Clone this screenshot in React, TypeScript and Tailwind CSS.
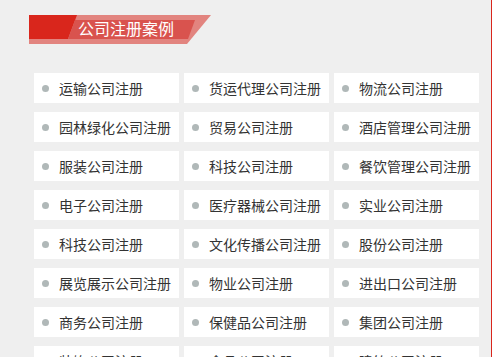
import React from 'react';

const items = [
  '运输公司注册', '货运代理公司注册', '物流公司注册',
  '园林绿化公司注册', '贸易公司注册', '酒店管理公司注册',
  '服装公司注册', '科技公司注册', '餐饮管理公司注册',
  '电子公司注册', '医疗器械公司注册', '实业公司注册',
  '科技公司注册', '文化传播公司注册', '股份公司注册',
  '展览展示公司注册', '物业公司注册', '进出口公司注册',
  '商务公司注册', '保健品公司注册', '集团公司注册',
  '装饰公司注册', '食品公司注册', '建筑公司注册',
];

export default function App() {
  return (
    <div
      className="h-[357px] w-[492px] overflow-hidden border-r border-[#d9261c] bg-[#efefef]"
      style={{ fontFamily: '"Noto Sans CJK SC", "Noto Sans", sans-serif' }}
    >
      {/* Title banner */}
      <div className="ml-[29px] pt-[15px]">
        <div className="relative h-[29px] w-[185px]">
          <svg className="absolute inset-0" width="185" height="29" viewBox="0 0 185 29">
            <polygon points="0,0 182,0 158,29 0,29" fill="#e2847f" />
            <polygon points="0,0 48,0 39,24 0,24" fill="#d9261c" />
            <polygon points="46,5 166,5 159,24 39,24" fill="#d9534e" />
          </svg>
          <span className="relative block pl-[49px] pt-[1px] text-[16px] leading-[24px] text-white">
            公司注册案例
          </span>
        </div>
      </div>

      {/* Case list */}
      <div className="ml-[34px] mt-[29px] grid w-[445px] grid-cols-3 gap-x-[5px] gap-y-[9px]">
        {items.map((name, i) => (
          <div key={i} className="flex h-[30px] items-center bg-white pl-[8px]">
            <span className="h-[7px] w-[7px] shrink-0 rounded-full bg-[#b0b8b8]" />
            <span className="ml-[10px] whitespace-nowrap text-[14px] text-[#333]">{name}</span>
          </div>
        ))}
      </div>
    </div>
  );
}
